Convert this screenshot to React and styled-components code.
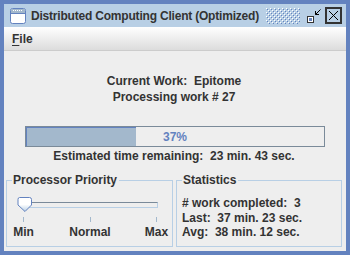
import React from "react";
import styled, { createGlobalStyle } from "styled-components";

const Global = createGlobalStyle`
  html, body { margin: 0; padding: 0; background: #6382BF; }
  body { font-family: "Liberation Sans", Arial, sans-serif; }
  * { box-sizing: border-box; }
`;

const Frame = styled.div`
  width: 350px;
  height: 255px;
  background: #6382BF;
  padding: 4px;
  display: flex;
  flex-direction: column;
`;

const TitleBar = styled.div`
  height: 23px;
  flex: none;
  background: #B8CFE5;
  display: flex;
  align-items: center;
  padding: 0 4px 0 6px;
`;

const TitleText = styled.span`
  font: bold 12px "Liberation Sans", Arial, sans-serif;
  color: #333333;
  margin-left: 5px;
  white-space: pre;
  letter-spacing: -0.2px;
`;

const Bumps = styled.svg`
  flex: 1;
  height: 16px;
  margin: 0 6px 0 7px;
`;

const TitleButtons = styled.div`
  display: flex;
  align-items: center;
  gap: 3px;
`;

const MenuBar = styled.div`
  height: 24px;
  flex: none;
  background: linear-gradient(#FFFFFF, #DCDCDC);
  border-bottom: 1px solid #CCCCCC;
  display: flex;
  align-items: center;
  padding-left: 8px;
`;

const MenuItem = styled.span`
  font: bold 12px "Liberation Sans", Arial, sans-serif;
  color: #333333;
  u { text-decoration: underline; text-underline-offset: 2px; }
`;

const Content = styled.div`
  flex: 1;
  background: #EEEEEE;
  display: flex;
  flex-direction: column;
  padding: 22px 4px 4px 2px;
`;

const Line = styled.div`
  font: bold 12px "Liberation Sans", Arial, sans-serif;
  color: #333333;
  line-height: 16px;
  margin-top: ${(p) => p.$gap || 0}px;
  text-align: center;
  white-space: pre;
`;

const ProgressWrap = styled.div`
  padding: 0 17px 0 19px;
  margin-top: 21px;
`;

const Progress = styled.div`
  position: relative;
  height: 21px;
  border: 1px solid #7A8A99;
  background: #EEEEEE;
  display: flex;
  align-items: center;
  justify-content: center;
`;

const ProgressFill = styled.div`
  position: absolute;
  left: 0;
  top: 0;
  bottom: 0;
  background: #A3B8CC;
  border-left: 1px solid #6382BF;
  border-top: 1px solid #6382BF;
`;

const ProgressText = styled.span`
  position: relative;
  font: bold 12px "Liberation Sans", Arial, sans-serif;
  color: #6382BF;
`;

const Groups = styled.div`
  display: grid;
  grid-template-columns: 167px 1fr;
  gap: 3px;
  margin-top: 9px;
  flex: 1;
`;

const Group = styled.fieldset`
  margin: 0;
  padding: 0;
  border: 1px solid #B8CFE5;
  min-width: 0;
  display: flex;
  flex-direction: column;
`;

const Legend = styled.legend`
  font: bold 12px "Liberation Sans", Arial, sans-serif;
  color: #333333;
  margin-left: 5px;
  padding: 0 2px 0 1px;
  line-height: 15px;
`;

const SliderBox = styled.div`
  position: relative;
  margin: 9px 14px 0 10px;
  height: 16px;
  display: flex;
  align-items: center;
`;

const Track = styled.div`
  flex: 1;
  height: 6px;
  margin-left: 6px;
  border: 1px solid #7A8A99;
  border-right-color: #B8CFE5;
  border-bottom-color: #B8CFE5;
  background: #EEEEEE;
`;

const Thumb = styled.svg`
  position: absolute;
  left: 0;
  top: 0;
`;

const TickRow = styled.div`
  display: flex;
  justify-content: space-between;
  margin: 4px 15px 0 16px;
  height: 5px;
`;

const Tick = styled.div`
  width: 1px;
  background: #A3B8CC;
`;

const LabelRow = styled.div`
  display: flex;
  justify-content: space-between;
  margin: 3px 15px 0 16px;
`;

const TickLabel = styled.div`
  width: 1px;
  display: flex;
  justify-content: center;
  font: bold 12px "Liberation Sans", Arial, sans-serif;
  color: #333333;
  line-height: 14px;
  white-space: pre;
`;

const Stats = styled.div`
  padding: 8px 0 0 5px;
`;

const StatLine = styled.div`
  font: bold 12px "Liberation Sans", Arial, sans-serif;
  color: #333333;
  line-height: 14.5px;
  white-space: pre;
`;

function WindowIcon() {
  return (
    <svg width="16" height="16" viewBox="0 0 16 16">
      <rect x="0.5" y="0.5" width="15" height="15" rx="2" fill="#FFFFFF" stroke="#6382BF" />
      <rect x="1" y="1" width="14" height="4" fill="#A3B8CC" />
      <line x1="1" y1="5.5" x2="15" y2="5.5" stroke="#6382BF" />
      {[3, 5, 7, 9, 11].map((x) => (
        <rect key={x} x={x} y="2" width="1" height="1" fill="#FFFFFF" />
      ))}
    </svg>
  );
}

function BumpsPattern() {
  return (
    <Bumps>
      <defs>
        <pattern id="bumps" width="4" height="4" patternUnits="userSpaceOnUse">
          <rect x="0" y="0" width="1" height="1" fill="#FFFFFF" />
          <rect x="2" y="2" width="1" height="1" fill="#FFFFFF" />
          <rect x="1" y="1" width="1" height="1" fill="#6382BF" />
          <rect x="3" y="3" width="1" height="1" fill="#6382BF" />
        </pattern>
      </defs>
      <rect width="100%" height="100%" fill="url(#bumps)" />
    </Bumps>
  );
}

function IconifyIcon() {
  return (
    <svg width="16" height="16" viewBox="0 0 16 16">
      <rect x="1.5" y="8.5" width="6" height="6" fill="#FFFFFF" stroke="#333333" />
      <rect x="3" y="10" width="3" height="3" fill="#6382BF" />
      <line x1="14.5" y1="1.5" x2="9.5" y2="6.5" stroke="#000000" />
      <polyline points="9.5,3 9.5,6.5 13,6.5" fill="none" stroke="#000000" />
    </svg>
  );
}

function CloseIcon() {
  return (
    <svg width="17" height="17" viewBox="0 0 17 17">
      <rect x="0.5" y="0.5" width="16" height="16" fill="#FFFFFF" stroke="#333333" />
      <rect x="1.5" y="1.5" width="14" height="14" fill="#B8CFE5" stroke="#333333" />
      <line x1="4" y1="4" x2="13" y2="13" stroke="#000000" />
      <line x1="13" y1="4" x2="4" y2="13" stroke="#000000" />
    </svg>
  );
}

function SliderThumb() {
  return (
    <Thumb width="16" height="16" viewBox="0 0 16 16">
      <defs>
        <linearGradient id="thumbGrad" x1="0" y1="0" x2="0" y2="1">
          <stop offset="0" stopColor="#FFFFFF" />
          <stop offset="0.5" stopColor="#FFFFFF" />
          <stop offset="1" stopColor="#B8CFE5" />
        </linearGradient>
      </defs>
      <path
        d="M2.5 0.5 H12.5 Q14.5 0.5 14.5 2.5 V8 L8 14.5 L1 8 V2.5 Q1 0.5 2.5 0.5 Z"
        fill="url(#thumbGrad)"
        stroke="#6382BF"
      />
    </Thumb>
  );
}

export default function App() {
  return (
    <>
      <Global />
      <Frame>
        <TitleBar>
          <WindowIcon />
          <TitleText>Distributed Computing Client (Optimized)</TitleText>
          <BumpsPattern />
          <TitleButtons>
            <IconifyIcon />
            <CloseIcon />
          </TitleButtons>
        </TitleBar>
        <MenuBar>
          <MenuItem>
            <u>F</u>ile
          </MenuItem>
        </MenuBar>
        <Content>
          <Line>Current Work:  Epitome</Line>
          <Line>Processing work # 27</Line>
          <ProgressWrap>
            <Progress>
              <ProgressFill style={{ width: "37%" }} />
              <ProgressText>37%</ProgressText>
            </Progress>
          </ProgressWrap>
          <Line $gap={1}>Estimated time remaining:  23 min. 43 sec.</Line>
          <Groups>
            <Group>
              <Legend>Processor Priority</Legend>
              <SliderBox>
                <Track />
                <SliderThumb />
              </SliderBox>
              <TickRow>
                <Tick />
                <Tick />
                <Tick />
              </TickRow>
              <LabelRow>
                <TickLabel>Min</TickLabel>
                <TickLabel>Normal</TickLabel>
                <TickLabel>Max</TickLabel>
              </LabelRow>
            </Group>
            <Group>
              <Legend>Statistics</Legend>
              <Stats>
                <StatLine># work completed:  3</StatLine>
                <StatLine>Last:  37 min. 23 sec.</StatLine>
                <StatLine>Avg:  38 min. 12 sec.</StatLine>
              </Stats>
            </Group>
          </Groups>
        </Content>
      </Frame>
    </>
  );
}
